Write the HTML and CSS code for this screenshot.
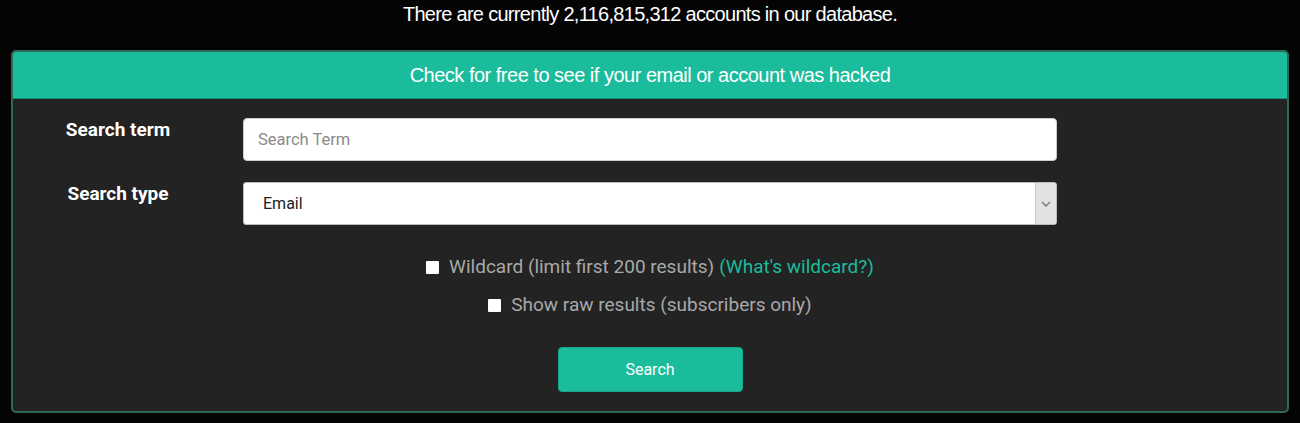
FILE: index.html
```html
<!DOCTYPE html>
<html lang="en">
<head>
<meta charset="utf-8">
<title>Check accounts</title>
<link rel="stylesheet" href="styles.css">
</head>
<body>
<p class="count">There are currently 2,116,815,312 accounts in our database.</p>
<section class="panel">
  <header class="panel-head">Check for free to see if your email or account was hacked</header>
  <form class="panel-body">
    <div class="row">
      <label class="label" for="term">Search term</label>
      <input class="field" id="term" type="text" placeholder="Search Term">
    </div>
    <div class="row">
      <label class="label" for="type">Search type</label>
      <div class="select">
        <span class="select-value">Email</span>
        <span class="select-arrow">
          <svg width="10" height="6" viewBox="0 0 10 6"><path d="M1 1 L5 5 L9 1" fill="none" stroke="#777" stroke-width="1.4"/></svg>
        </span>
      </div>
    </div>
    <div class="checks">
      <label class="check"><span class="box"></span>Wildcard (limit first 200 results) <a class="link" href="#">(What's wildcard?)</a></label>
      <label class="check"><span class="box"></span>Show raw results (subscribers only)</label>
    </div>
    <div class="actions">
      <button class="btn" type="button">Search</button>
    </div>
  </form>
</section>
</body>
</html>
```
FILE: styles.css
```css
html, body {
  margin: 0;
  padding: 0;
  background: #040404;
}
body {
  font-family: Roboto, "Liberation Sans", Arial, sans-serif;
  color: #fff;
  padding: 0 11px 12px 11px;
}
.count {
  margin: 0;
  height: 50px;
  padding-top: 4px;
  box-sizing: border-box;
  text-align: center;
  font-family: "Liberation Sans", Arial, sans-serif;
  font-size: 20px;
  letter-spacing: -0.7px;
  line-height: 20px;
}
.panel {
  border: 2px solid #2d6a5b;
  border-radius: 5px;
  background: #232323;
  overflow: hidden;
}
.panel-head {
  background: #1abc9c;
  height: 46px;
  line-height: 46px;
  text-align: center;
  font-family: "Liberation Sans", Arial, sans-serif;
  font-size: 20px;
  letter-spacing: -0.5px;
  border-bottom: 1px solid #178f77;
}
.panel-body {
  padding: 19px 0 19px 0;
  margin: 0;
}
.row {
  display: flex;
  align-items: center;
  margin-bottom: 21px;
}
.label {
  width: 210px;
  text-align: center;
  font-weight: 700;
  font-size: 19px;
  align-self: flex-start;
  padding-top: 0;
  margin-right: 20px;
}
.field {
  width: 814px;
  height: 43px;
  box-sizing: border-box;
  border: 1px solid #ccc;
  border-radius: 4px;
  background: #fff;
  padding: 0 14px;
  font-family: Roboto, sans-serif;
  font-size: 16.5px;
  color: #333;
}
.field::placeholder {
  color: #8a8a8a;
}
.select {
  width: 814px;
  height: 43px;
  box-sizing: border-box;
  border: 1px solid #bbb;
  border-radius: 3px;
  background: #fff;
  display: flex;
  align-items: stretch;
  overflow: hidden;
}
.select-value {
  flex: 1;
  color: #222;
  font-size: 16px;
  padding-left: 19px;
  display: flex;
  align-items: center;
}
.select-arrow {
  width: 20px;
  background: #e2e2e2;
  border-left: 1px solid #ccc;
  display: flex;
  align-items: center;
  justify-content: center;
}
.checks {
  display: flex;
  flex-direction: column;
  align-items: center;
  gap: 16px;
  margin-top: 31px;
  color: #a8a8a8;
  font-size: 19px;
}
.check {
  display: flex;
  align-items: center;
  line-height: 22px;
}
.box {
  width: 13px;
  height: 13px;
  background: #fff;
  border-radius: 1px;
  margin-right: 10px;
  display: inline-block;
}
.link {
  color: #1abc9c;
  text-decoration: none;
  margin-left: 5px;
}
.actions {
  display: flex;
  justify-content: center;
  margin-top: 31px;
}
.btn {
  width: 185px;
  height: 45px;
  background: #1abc9c;
  color: #fff;
  border: 1px solid #18a88b;
  border-radius: 4px;
  font-family: Roboto, sans-serif;
  font-size: 16px;
}
```
